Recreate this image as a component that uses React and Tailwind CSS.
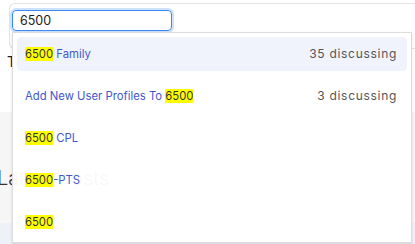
import React from 'react';

const results = [
  { parts: [{ hit: true, text: '6500' }, { text: ' Family' }], count: '35 discussing' },
  { parts: [{ text: 'Add New User Profiles To ' }, { hit: true, text: '6500' }], count: '3 discussing' },
  { parts: [{ hit: true, text: '6500' }, { text: ' CPL' }] },
  { parts: [{ hit: true, text: '6500' }, { text: '-PTS' }] },
  { parts: [{ hit: true, text: '6500' }] },
];

function ResultRow({ item, active }) {
  return (
    <div
      className={`h-[34px] shrink-0 flex items-center justify-between pl-2 pr-[10px] rounded-sm ${
        active ? 'bg-[#f0f3fb]' : ''
      }`}
    >
      <span className="text-[11.3px] text-[#3f58cc] whitespace-pre">
        {item.parts.map((p, i) =>
          p.hit ? (
            <mark key={i} className="bg-[#ffff00] text-[#333]">
              {p.text}
            </mark>
          ) : (
            <span key={i}>{p.text}</span>
          )
        )}
      </span>
      {item.count && <span className="text-[12px] tracking-[0.7px] text-[#555]">{item.count}</span>}
    </div>
  );
}

export default function App() {
  return (
    <div className="relative w-[415px] h-[244px] overflow-hidden bg-white font-['Inter',sans-serif]">
      {/* Page behind the dropdown */}
      <div className="ml-[9px] mt-[3px] h-[46px] border border-r-0 border-[#e3e3e3] rounded-tl-md rounded-bl-md pl-[2px] pt-[3px]">
        <input
          readOnly
          value="6500"
          className="w-[160px] h-[21px] rounded-[4px] border border-[#3b8af0] ring-2 ring-[#3b8af0]/25 px-[7px] text-[12.5px] text-[#222] outline-none"
        />
      </div>
      <div className="h-[63px] pt-[3px] pl-[7px] text-[14px] text-[#222] leading-[20px]">Top Community Help</div>
      <div className="h-[111px] bg-[#f6f6f6] pt-[52px] -ml-[3px] text-[20px] font-light text-[#333] leading-[28px]">
        Latest Posts
      </div>
      <div className="h-[30px] bg-[#eef1f8]" />

      {/* Search suggestions dropdown */}
      <div className="absolute left-[12px] top-[32px] w-[400px] h-[211px] border border-[#dcdcdc] bg-white/[0.97] shadow-sm pt-1 px-1 flex flex-col gap-[8px]">
        {results.map((r, i) => (
          <ResultRow key={i} item={r} active={i === 0} />
        ))}
      </div>
    </div>
  );
}
